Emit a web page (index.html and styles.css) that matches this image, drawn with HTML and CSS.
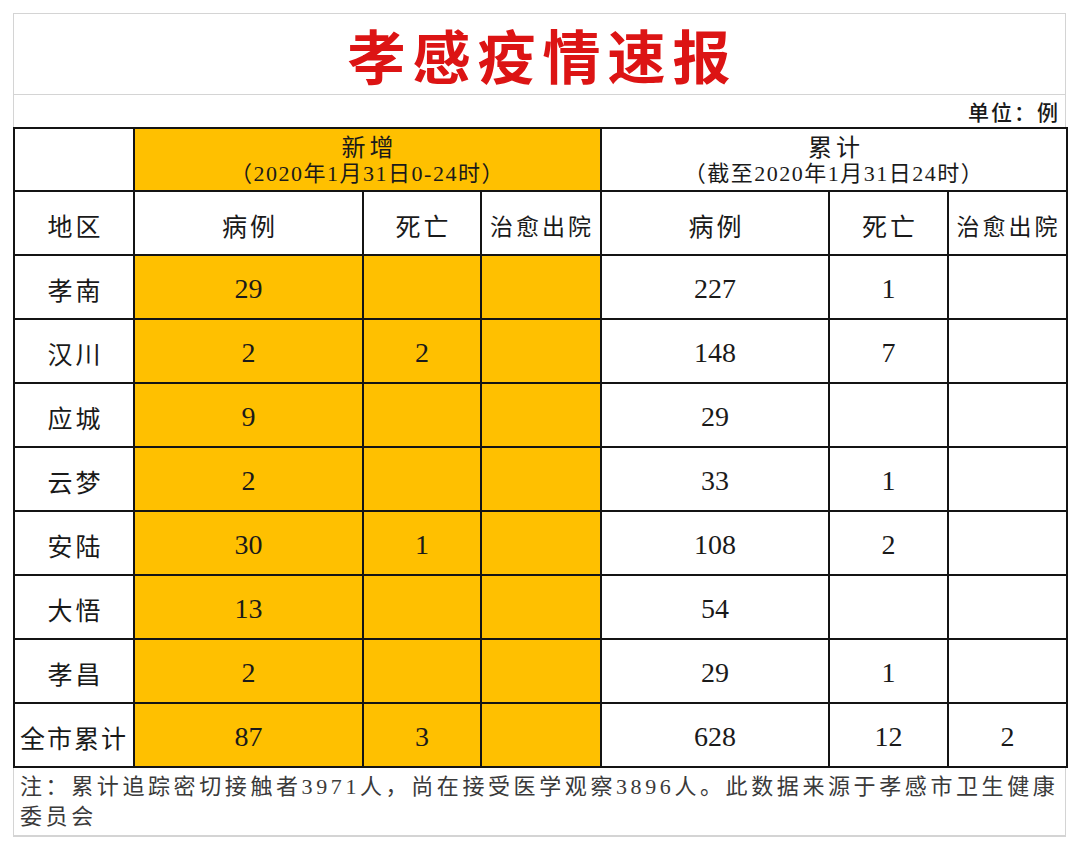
FILE: index.html
```html
<!DOCTYPE html>
<html lang="zh-CN">
<head>
<meta charset="utf-8">
<title>孝感疫情速报</title>
<link rel="stylesheet" href="styles.css">
</head>
<body>
<div class="sheet">
  <div class="title-row"><h1 class="title">孝感疫情速报</h1></div>
  <div class="unit-row">单位：例</div>
  <table class="grid">
    <colgroup>
      <col class="c-area"><col class="c-wide"><col class="c-narrow"><col class="c-narrow2">
      <col class="c-wide2"><col class="c-narrow3"><col class="c-narrow4">
    </colgroup>
    <tr class="h1">
      <td></td>
      <td colspan="3" class="yel group"><div class="g-main">新增</div><div class="g-sub">（2020年1月31日0-24时）</div></td>
      <td colspan="3" class="group"><div class="g-main">累计</div><div class="g-sub">（截至2020年1月31日24时）</div></td>
    </tr>
    <tr class="h2">
      <td class="lbl">地区</td><td class="lbl">病例</td><td class="lbl">死亡</td><td class="lbl sm">治愈出院</td>
      <td class="lbl">病例</td><td class="lbl">死亡</td><td class="lbl sm">治愈出院</td>
    </tr>
    <tr><td class="lbl">孝南</td><td class="yel">29</td><td class="yel"></td><td class="yel"></td><td>227</td><td>1</td><td></td></tr>
    <tr><td class="lbl">汉川</td><td class="yel">2</td><td class="yel">2</td><td class="yel"></td><td>148</td><td>7</td><td></td></tr>
    <tr><td class="lbl">应城</td><td class="yel">9</td><td class="yel"></td><td class="yel"></td><td>29</td><td></td><td></td></tr>
    <tr><td class="lbl">云梦</td><td class="yel">2</td><td class="yel"></td><td class="yel"></td><td>33</td><td>1</td><td></td></tr>
    <tr><td class="lbl">安陆</td><td class="yel">30</td><td class="yel">1</td><td class="yel"></td><td>108</td><td>2</td><td></td></tr>
    <tr><td class="lbl">大悟</td><td class="yel">13</td><td class="yel"></td><td class="yel"></td><td>54</td><td></td><td></td></tr>
    <tr><td class="lbl">孝昌</td><td class="yel">2</td><td class="yel"></td><td class="yel"></td><td>29</td><td>1</td><td></td></tr>
    <tr><td class="lbl total">全市累计</td><td class="yel">87</td><td class="yel">3</td><td class="yel"></td><td>628</td><td>12</td><td>2</td></tr>
  </table>
  <div class="note">注：累计追踪密切接触者3971人，尚在接受医学观察3896人。此数据来源于孝感市卫生健康<br>委员会</div>
</div>
</body>
</html>
```
FILE: styles.css
```css
html, body {
  margin: 0;
  padding: 0;
  background: #ffffff;
}
body {
  font-family: "Liberation Serif", "Noto Sans CJK SC", serif;
  color: #1a1a1a;
}
.sheet {
  margin: 13px 0 0 13px;
  width: 1053px;
  border: 1px solid #d4d4d4;
  border-bottom: 2px solid #d4d4d4;
  box-sizing: border-box;
}
.title-row {
  height: 80px;
  border-bottom: 1px solid #d4d4d4;
  display: flex;
  align-items: center;
  justify-content: center;
}
.title {
  margin: 0;
  padding-left: 6px;
  font-family: "Noto Sans CJK SC", sans-serif;
  font-weight: 700;
  font-size: 58px;
  letter-spacing: 7px;
  color: #dc1414;
  line-height: 1;
}
.unit-row {
  height: 32px;
  display: flex;
  align-items: center;
  justify-content: flex-end;
  padding-right: 5px;
  font-family: "Noto Sans CJK SC", sans-serif;
  font-size: 21px;
  font-weight: 500;
  letter-spacing: 2px;
}
.grid {
  border-collapse: collapse;
  table-layout: fixed;
  width: 1053px;
  margin-left: -1px;
}
.c-area { width: 120px; }
.c-wide { width: 229px; }
.c-narrow { width: 118px; }
.c-narrow2 { width: 120px; }
.c-wide2 { width: 228px; }
.c-narrow3 { width: 119px; }
.c-narrow4 { width: 119px; }
.grid td {
  border: 2px solid #141414;
  height: 58px;
  padding: 4px 0 0;
  text-align: center;
  vertical-align: middle;
  font-size: 28px;
  line-height: 1;
  background: #ffffff;
}
.grid td.yel {
  background: #ffc000;
}
.grid .h1 td {
  height: 61px;
  padding: 0;
}
.group {
  font-family: "Noto Sans CJK SC", sans-serif;
}
.g-main {
  font-size: 24px;
  line-height: 28px;
  letter-spacing: 4px;
  padding-left: 4px;
}
.g-sub {
  font-family: "Liberation Serif", "Noto Sans CJK SC", serif;
  font-size: 22px;
  line-height: 28px;
  letter-spacing: 1.5px;
}
.lbl {
  font-family: "Noto Sans CJK SC", sans-serif;
  font-size: 25px !important;
  letter-spacing: 3px;
  padding-left: 3px !important;
}
.lbl.sm {
  font-size: 23px !important;
  letter-spacing: 3px;
  padding-left: 2px !important;
  white-space: nowrap;
}
.lbl.total {
  letter-spacing: 2px;
  white-space: nowrap;
  padding-left: 0 !important;
}
.note {
  padding: 4px 0 3px 6px;
  font-size: 22px;
  line-height: 30px;
  letter-spacing: 3.6px;
  color: #3a3a3a;
  white-space: nowrap;
}
```
